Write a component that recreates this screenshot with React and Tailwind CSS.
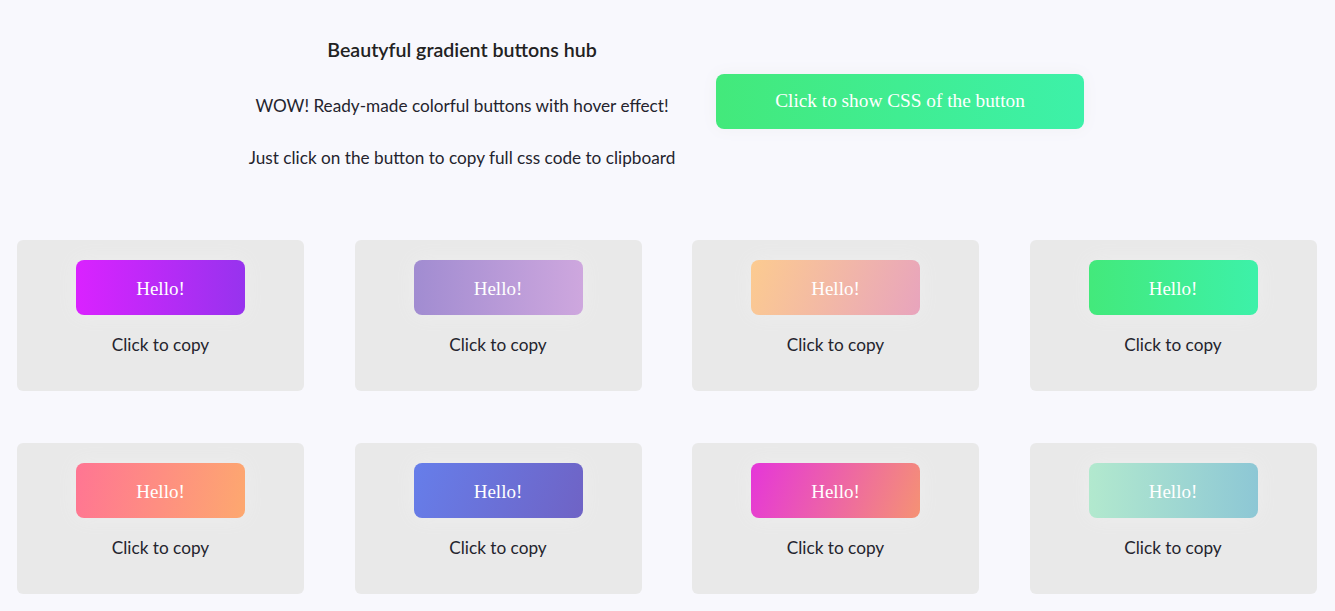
import React from "react";

const buttons = [
  "bg-[linear-gradient(to_right,#da22ff,#9733ee)]",
  "bg-[linear-gradient(to_right,#a18cd1,#cea7de)]",
  "bg-[linear-gradient(110deg,#fccb90,#e8a4bd)]",
  "bg-[linear-gradient(to_right,#43e97b,#3df1a9)]",
  "bg-[linear-gradient(100deg,#ff7593,#fda86f)]",
  "bg-[linear-gradient(110deg,#667eea,#6f63c5)]",
  "bg-[linear-gradient(110deg,#e536d9,#f59274)]",
  "bg-[linear-gradient(to_right,#b2e9ce,#8dc7d5)]",
];

const sans = "font-['Lato','Open_Sans',sans-serif]";
const serif = "font-['Liberation_Serif','Times_New_Roman',serif]";

export default function App() {
  return (
    <div className={`min-h-[611px] w-full bg-[#f8f8fd] text-[#24242e] ${sans}`}>
      <header className="flex justify-center items-start gap-[43px] pt-[37px]">
        <div className="w-[422px] flex flex-col items-center">
          <h1 className="text-[19.6px] leading-[26px] font-semibold text-[#222] whitespace-nowrap">
            Beautyful gradient buttons hub
          </h1>
          <p className="mt-[31px] text-[17.2px] leading-[24px] whitespace-nowrap">
            WOW! Ready-made colorful buttons with hover effect!
          </p>
          <p className="mt-[28px] text-[17.2px] leading-[24px] whitespace-nowrap">
            Just click on the button to copy full css code to clipboard
          </p>
        </div>
        <button
          className={`mt-[37px] w-[368px] h-[55px] rounded-[8px] text-white text-[19.3px] ${serif} bg-[linear-gradient(to_right,#43e97b,#3df1a9)] shadow-[0_0_16px_#f0f0f4]`}
        >
          Click to show CSS of the button
        </button>
      </header>

      <main className="grid grid-cols-[repeat(4,287px)] gap-x-[50.5px] gap-y-[52px] px-[17px] mt-[70px]">
        {buttons.map((bg, i) => (
          <div
            key={i}
            className="h-[151px] rounded-[6px] bg-[#e9e9e9] flex flex-col items-center pt-[20px]"
          >
            <button
              className={`w-[169px] h-[55px] pt-[3px] rounded-[8px] text-white text-[19px] ${serif} ${bg} shadow-[0_0_20px_#eeeeee]`}
            >
              Hello!
            </button>
            <span className="mt-[18px] text-[17.2px] leading-[24px]">Click to copy</span>
          </div>
        ))}
      </main>
    </div>
  );
}
